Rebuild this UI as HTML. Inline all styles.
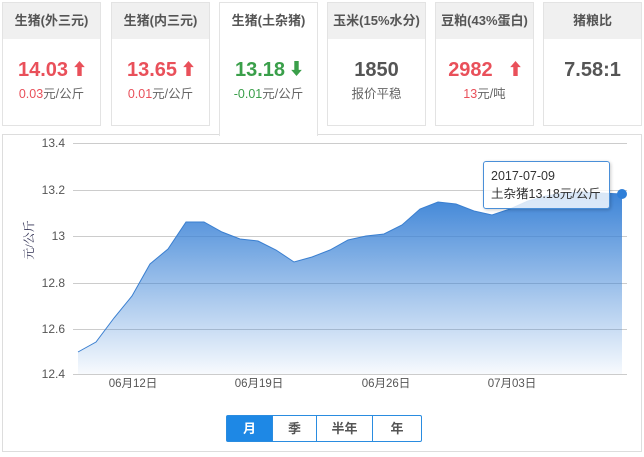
<!DOCTYPE html>
<html><head><meta charset="utf-8"><style>
*{margin:0;padding:0;box-sizing:border-box}
body{width:644px;height:457px;background:#fff;font-family:"Liberation Sans","Noto Sans CJK SC",sans-serif;position:relative;overflow:hidden}
.card{position:absolute;top:2px;width:99px;height:124px;border:1px solid #e3e3e3;background:#fff;text-align:center}
.card .h{height:36px;background:#f0f0f0;line-height:36px;font-size:13px;font-weight:bold;color:#555}
.card .v{margin-top:19px;font-size:20px;font-weight:bold;line-height:24px}
.card .s{margin-top:4px;font-size:12.5px;color:#666;line-height:16px}
.card .v svg{vertical-align:0px;margin-left:6px}
.red{color:#e9505a}.green{color:#3a9f4a}.gray{color:#555}
.act{height:134px;border-bottom:none;z-index:2}
.act .h{background:#fff}
.panel{position:absolute;left:2px;top:134px;width:640px;height:318px;border:1px solid #ddd}
.btns{position:absolute;left:226px;top:415px;height:27px;display:flex;border:1px solid #2a8ce0;border-radius:2px;z-index:3}
.btns div{height:25px;line-height:25px;text-align:center;font-size:13px;font-weight:bold;color:#555;border-left:1px solid #2a8ce0}
.btns div:first-child{border-left:none;background:#1e88e5;color:#fff}
.tip{position:absolute;left:483px;top:161px;width:127px;height:48px;border:1px solid #4a8fd8;border-radius:3px;background:rgba(255,255,255,.8);font-size:12.5px;color:#333;padding:5px 0 0 7px;line-height:18px;z-index:4;box-shadow:1px 1px 3px rgba(0,0,0,.2)}
</style></head><body>
<div class="card" style="left:2px"><div class="h">生猪(外三元)</div><div class="v red">14.03<svg width="11" height="15" viewBox="0 0 12 17"><path d="M6 0L12 7H8.5V17H3.5V7H0Z" fill="#e9505a"/></svg></div><div class="s"><span class="red">0.03</span>元/公斤</div></div>
<div class="card" style="left:111px"><div class="h">生猪(内三元)</div><div class="v red">13.65<svg width="11" height="15" viewBox="0 0 12 17"><path d="M6 0L12 7H8.5V17H3.5V7H0Z" fill="#e9505a"/></svg></div><div class="s"><span class="red">0.01</span>元/公斤</div></div>
<div class="card act" style="left:219px"><div class="h">生猪(土杂猪)</div><div class="v green">13.18<svg width="11" height="15" viewBox="0 0 12 17"><path d="M6 17L12 10H8.5V0H3.5V10H0Z" fill="#3a9f4a"/></svg></div><div class="s"><span class="green">-0.01</span>元/公斤</div></div>
<div class="card" style="left:327px"><div class="h">玉米(15%水分)</div><div class="v gray">1850</div><div class="s">报价平稳</div></div>
<div class="card" style="left:435px"><div class="h">豆粕(43%蛋白)</div><div class="v red">2982 &nbsp;<svg width="11" height="15" viewBox="0 0 12 17"><path d="M6 0L12 7H8.5V17H3.5V7H0Z" fill="#e9505a"/></svg></div><div class="s"><span class="red">13</span>元/吨</div></div>
<div class="card" style="left:543px"><div class="h">猪粮比</div><div class="v gray">7.58:1</div></div>
<div class="panel"></div>
<svg style="position:absolute;left:0;top:0" width="644" height="457">
<defs><linearGradient id="g" gradientUnits="userSpaceOnUse" x1="0" y1="190" x2="0" y2="374"><stop offset="0" stop-color="#3a82d6"/><stop offset="1" stop-color="#3a82d6" stop-opacity="0.04"/></linearGradient></defs>
<g stroke="#ccc" stroke-width="1">
<line x1="73" y1="143.5" x2="627" y2="143.5"/><line x1="73" y1="190.5" x2="627" y2="190.5"/><line x1="73" y1="236.5" x2="627" y2="236.5"/><line x1="73" y1="283.5" x2="627" y2="283.5"/><line x1="73" y1="329.5" x2="627" y2="329.5"/><line x1="73" y1="374.5" x2="627" y2="374.5"/>
</g>
<path d="M78,352 L96,342 L114,318 L132,296 L150,264 L168,249 L186,222 L204,222 L222,232 L240,239 L258,241 L276,250 L294,262 L312,257 L330,250 L348,240 L366,236 L384,234 L402,225 L420,209 L438,202 L456,204 L474,211 L492,215 L510,209 L528,201 L546,196 L564,193 L582,192 L600,193 L622,194 L622,374 L78,374 Z" fill="url(#g)"/>
<path d="M78,352 L96,342 L114,318 L132,296 L150,264 L168,249 L186,222 L204,222 L222,232 L240,239 L258,241 L276,250 L294,262 L312,257 L330,250 L348,240 L366,236 L384,234 L402,225 L420,209 L438,202 L456,204 L474,211 L492,215 L510,209 L528,201 L546,196 L564,193 L582,192 L600,193 L622,194" fill="none" stroke="#3a7fd0" stroke-width="1"/>
<circle cx="622" cy="194" r="5" fill="#2f7fd8"/>
<g font-size="12" fill="#555" font-family="Liberation Sans,sans-serif" text-anchor="end">
<text x="65" y="147">13.4</text><text x="65" y="194">13.2</text><text x="65" y="240">13</text><text x="65" y="287">12.8</text><text x="65" y="333">12.6</text><text x="65" y="378">12.4</text>
</g>
<g font-size="11.5" fill="#555" font-family="Liberation Sans,Noto Sans CJK SC,sans-serif" text-anchor="middle">
<text x="133" y="387">06月12日</text><text x="259" y="387">06月19日</text><text x="386" y="387">06月26日</text><text x="512" y="387">07月03日</text>
</g>
<text transform="translate(33,240) rotate(-90)" font-size="12" fill="#335" text-anchor="middle" font-family="Liberation Serif,Noto Serif CJK SC,serif">元/公斤</text>
</svg>
<div class="tip">2017-07-09<br>土杂猪13.18元/公斤</div>
<div class="btns"><div style="width:45px">月</div><div style="width:44px">季</div><div style="width:56px">半年</div><div style="width:49px">年</div></div>
</body></html>
